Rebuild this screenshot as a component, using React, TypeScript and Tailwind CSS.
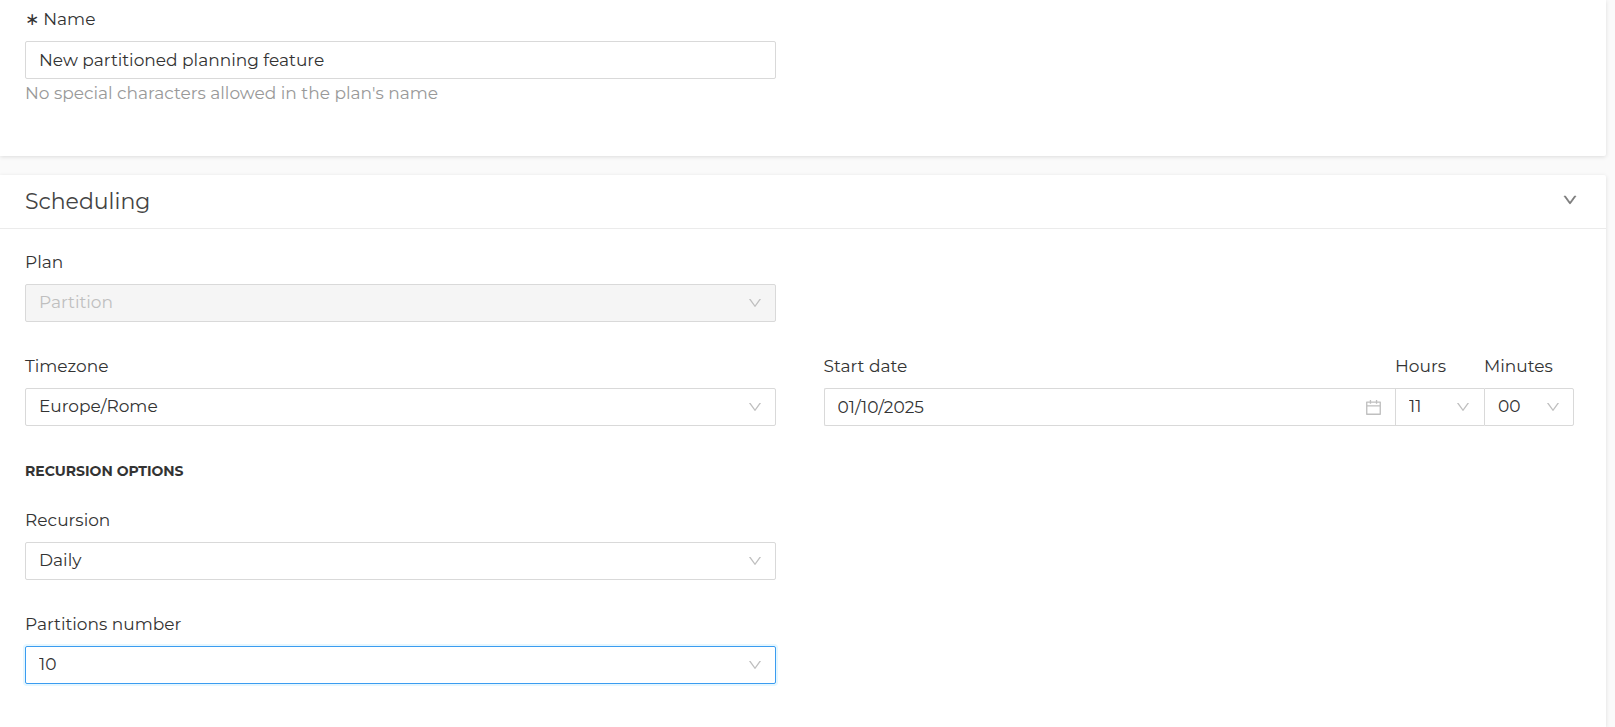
import { useState, type ReactNode } from "react";

const downPath =
  "M884 256h-75c-5.1 0-9.9 2.5-12.9 6.6L512 654.2 227.9 262.6c-3-4.1-7.8-6.6-12.9-6.6h-75c-6.5 0-10.3 7.4-6.5 12.7l352.6 486.1c12.8 17.6 39 17.6 51.7 0l352.6-486.1c3.9-5.3.1-12.7-6.4-12.7z";

const calendarPath =
  "M880 184H712v-64c0-4.4-3.6-8-8-8h-56c-4.4 0-8 3.6-8 8v64H384v-64c0-4.4-3.6-8-8-8h-56c-4.4 0-8 3.6-8 8v64H144c-17.7 0-32 14.3-32 32v664c0 17.7 14.3 32 32 32h736c17.7 0 32-14.3 32-32V216c0-17.7-14.3-32-32-32zm-40 656H184V460h656v380zM184 392V256h128v48c0 4.4 3.6 8 8 8h56c4.4 0 8-3.6 8-8v-48h256v48c0 4.4 3.6 8 8 8h56c4.4 0 8-3.6 8-8v-48h128v136H184z";

function Icon({ path, className }: { path: string; className: string }) {
  return (
    <svg viewBox="0 0 1024 1024" fill="currentColor" aria-hidden="true" className={className}>
      <path d={path} />
    </svg>
  );
}

function Field({ id, label, children }: { id: string; label: ReactNode; children: ReactNode }) {
  return (
    <div className="min-w-0">
      <label htmlFor={id} className="mb-2 block leading-7">
        {label}
      </label>
      {children}
    </div>
  );
}

type SelectProps = {
  id: string;
  value: string;
  options: string[];
  disabled?: boolean;
  focused?: boolean;
  shape?: string;
};

function Select({ id, value, options, disabled, focused, shape = "rounded-xs" }: SelectProps) {
  const [current, setCurrent] = useState(value);
  const tone = disabled
    ? "border-[#d9d9d9] bg-[#f5f5f5] text-[#bfbfbf] opacity-100"
    : focused
      ? "border-[#3b9cf0] bg-white shadow-[0_0_0_2px_#e6f7ff]"
      : "border-[#d9d9d9] bg-white";
  return (
    <div className="relative">
      <select
        id={id}
        value={current}
        disabled={disabled}
        onChange={(e) => setCurrent(e.target.value)}
        className={`block h-[38px] w-full appearance-none border pl-[13px] pr-9 outline-none ${shape} ${tone}`}
      >
        {options.map((o) => (
          <option key={o}>{o}</option>
        ))}
      </select>
      <Icon
        path={downPath}
        className="pointer-events-none absolute inset-y-0 right-[13px] my-auto size-4 text-[#bfbfbf]"
      />
    </div>
  );
}

export default function App() {
  const [name, setName] = useState("New partitioned planning feature");
  const [date, setDate] = useState("01/10/2025");
  const [open, setOpen] = useState(true);

  return (
    <main className="flex min-h-screen flex-col gap-[19px] bg-[#fafafa] pr-[9px] font-[Montserrat,Inter,sans-serif] text-[17px] text-[#333333]">
      <section className="rounded-br-xs bg-white pt-[5px] pr-8 pb-[49px] pl-[25px] shadow-[0_1px_4px_rgba(0,0,0,0.12)]">
        <div className="grid grid-cols-2 gap-x-12">
          <Field
            id="name"
            label={
              <>
                <span className="mr-1 inline-block font-['DejaVu_Sans']">∗</span>Name
              </>
            }
          >
            <input
              id="name"
              value={name}
              onChange={(e) => setName(e.target.value)}
              className="block h-[38px] w-full rounded-xs border border-[#d9d9d9] bg-white px-[13px] outline-none"
            />
            <p className="leading-7 text-[#999999]">No special characters allowed in the plan's name</p>
          </Field>
        </div>
      </section>

      <section className="grow rounded-tr-xs bg-white shadow-[0_1px_4px_rgba(0,0,0,0.12)]">
        <header className="flex h-[54px] items-center justify-between border-b border-[#ebebeb] pr-7 pl-[25px]">
          <h2 className="text-[22px] text-[#444444]">Scheduling</h2>
          <button type="button" aria-label="Toggle scheduling" aria-expanded={open} onClick={() => setOpen(!open)} className="mb-1">
            <Icon path={downPath} className="size-4 stroke-current stroke-40 text-[#7a7a7a]" />
          </button>
        </header>

        {open && (
          <div className="grid grid-cols-2 gap-x-12 gap-y-[30px] pt-[19px] pr-8 pb-10 pl-[25px]">
            <Field id="plan" label="Plan">
              <Select id="plan" value="Partition" options={["Partition"]} disabled />
            </Field>

            <div className="col-start-1">
              <Field id="timezone" label="Timezone">
                <Select id="timezone" value="Europe/Rome" options={["Europe/Rome", "Europe/London"]} />
              </Field>
            </div>

            <div className="grid grid-cols-[1fr_89px_90px]">
              <Field id="date" label="Start date">
                <div className="relative">
                  <input
                    id="date"
                    value={date}
                    onChange={(e) => setDate(e.target.value)}
                    className="block h-[38px] w-full rounded-l-xs border border-r-0 border-[#d9d9d9] bg-white pr-10 pl-[13px] outline-none"
                  />
                  <Icon
                    path={calendarPath}
                    className="pointer-events-none absolute inset-y-0 right-3 my-auto size-[19px] text-[#bfbfbf]"
                  />
                </div>
              </Field>
              <Field id="hours" label="Hours">
                <Select id="hours" value="11" options={["10", "11", "12"]} shape="border-r-0" />
              </Field>
              <Field id="minutes" label="Minutes">
                <Select id="minutes" value="00" options={["00", "15", "30", "45"]} shape="rounded-r-xs" />
              </Field>
            </div>

            <div className="col-start-1">
              <h3 className="mb-5 text-[14px] leading-[30px] font-bold">RECURSION OPTIONS</h3>
              <Field id="recursion" label="Recursion">
                <Select id="recursion" value="Daily" options={["Daily", "Weekly", "Monthly"]} />
              </Field>
            </div>

            <div className="col-start-1">
              <Field id="partitions" label="Partitions number">
                <Select id="partitions" value="10" options={["5", "10", "20"]} focused />
              </Field>
            </div>
          </div>
        )}
      </section>
    </main>
  );
}
